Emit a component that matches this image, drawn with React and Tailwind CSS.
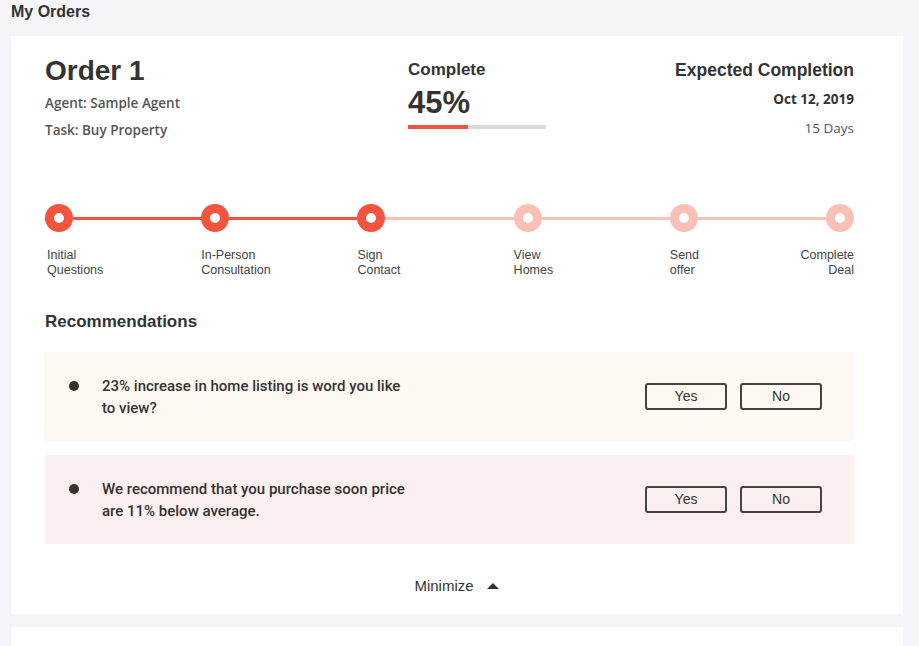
import React from "react";

const steps = [
  ["Initial", "Questions"],
  ["In-Person", "Consultation"],
  ["Sign", "Contact"],
  ["View", "Homes"],
  ["Send", "offer"],
  ["Complete", "Deal"],
];

const recs = [
  { text: ["23% increase in home listing is word you like", "to view?"], bg: "bg-[#fdf8f1]" },
  { text: ["We recommend that you purchase soon price", "are 11% below average."], bg: "bg-[#fcefef]" },
];

const Dot = ({ active }) => (
  <div
    className={`w-[28px] h-[28px] rounded-full flex items-center justify-center shrink-0 ${
      active ? "bg-[#f5533d]" : "bg-[#f9c0b5]"
    }`}
  >
    <div className="w-[10px] h-[10px] rounded-full bg-white" />
  </div>
);

const App = () => {
  const done = 3;

  return (
    <div className="min-h-screen bg-[#f4f4f9] text-[#333] font-['Liberation_Sans',sans-serif]">
      <h1 className="px-[11px] pt-[1px] h-[36px] text-[16px] font-bold leading-[22px]">My Orders</h1>

      <div className="mx-[11px] w-[892px] bg-white pl-[34px] pr-[49px] pt-[18px] h-[578px]">
        {/* Header */}
        <div className="flex justify-between">
          <div className="w-[363px]">
            <h2 className="text-[28px] font-bold leading-[34px]">Order 1</h2>
            <p className="mt-[5px] text-[13.5px] leading-[20px] font-['Open_Sans',sans-serif] font-semibold text-[#555]">
              Agent: Sample Agent
            </p>
            <p className="mt-[7px] text-[13.5px] leading-[20px] font-['Open_Sans',sans-serif] font-semibold text-[#555]">
              Task: Buy Property
            </p>
          </div>
          <div className="flex-1 pt-[4px]">
            <p className="text-[17px] font-bold leading-[24px]">Complete</p>
            <p className="text-[31px] font-semibold leading-[38px] mt-[2px]">45%</p>
            <div className="w-[138px] h-[4px] bg-[#d9d9d9] mt-[3px] flex">
              <div className="w-[60px] h-full bg-[#f5533d]" />
            </div>
          </div>
          <div className="text-right pt-[4px]">
            <p className="text-[17.5px] font-bold leading-[24px]">Expected Completion</p>
            <p className="text-[13.5px] leading-[20px] font-bold mt-[7px] font-['Open_Sans',sans-serif]">Oct 12, 2019</p>
            <p className="text-[13.5px] leading-[20px] mt-[9px] font-['Open_Sans',sans-serif] text-[#555]">15 Days</p>
          </div>
        </div>

        {/* Timeline */}
        <div className="mt-[64px] flex items-center">
          {steps.map((s, i) => (
            <React.Fragment key={i}>
              <Dot active={i < done} />
              {i < steps.length - 1 && (
                <div className={`flex-1 h-[3px] ${i < done - 1 ? "bg-[#f5533d]" : "bg-[#f9c0b5]"}`} />
              )}
            </React.Fragment>
          ))}
        </div>
        <div className="mt-[16px] flex text-[12.5px] leading-[15px] text-[#444]">
          {steps.map((s, i) => (
            <React.Fragment key={i}>
              <div
                className={`w-[28px] shrink-0 flex flex-col whitespace-nowrap ${
                  i === steps.length - 1 ? "items-end text-right" : i === 0 ? "items-start pl-[2px]" : "items-start"
                }`}
              >
                <div>{s[0]}</div>
                <div>{s[1]}</div>
              </div>
              {i < steps.length - 1 && <div className="flex-1" />}
            </React.Fragment>
          ))}
        </div>

        {/* Recommendations */}
        <h3 className="mt-[32px] text-[17px] font-bold leading-[24px]">Recommendations</h3>
        <div className="mt-[18px] flex flex-col gap-[14px]">
          {recs.map((r, i) => (
            <div key={i} className={`${r.bg} h-[89px] flex items-center pl-[24px] pr-[32px]`}>
              <div className="w-[10px] h-[10px] rounded-full bg-[#333] self-start mt-[29px]" />
              <p className="ml-[23px] flex-1 text-[15px] leading-[22px] font-medium font-['Roboto',sans-serif] text-[#333]">
                {r.text[0]}
                <br />
                {r.text[1]}
              </p>
              <div className="flex gap-[13px]">
                <button className="w-[82px] h-[27px] border-2 border-[#444] rounded-[3px] text-[14px] text-[#333]">
                  Yes
                </button>
                <button className="w-[82px] h-[27px] border-2 border-[#444] rounded-[3px] text-[14px] text-[#333]">
                  No
                </button>
              </div>
            </div>
          ))}
        </div>

        <div className="mt-[31px] flex items-center justify-center gap-[13px] text-[15px] text-[#333] pl-[14px]">
          <span>Minimize</span>
          <svg width="12" height="8" viewBox="0 0 12 8">
            <path d="M0 7 L6 1 L12 7 Z" fill="#333" />
          </svg>
        </div>
      </div>

      <div className="mx-[11px] mt-[13px] w-[892px] bg-white h-[40px]" />
    </div>
  );
};

export default App;
